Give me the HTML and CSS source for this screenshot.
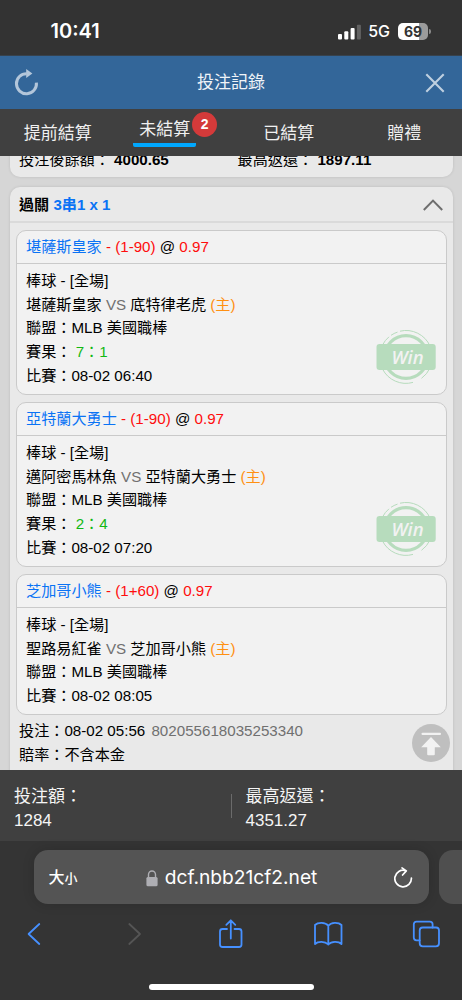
FILE: index.html
```
<!DOCTYPE html>
<html lang="zh-Hant">
<head>
    <meta charset="UTF-8">
    <meta name="viewport" content="width=device-width, initial-scale=1.0">
    <title>投注記錄</title>
    <link rel="stylesheet" href="styles.css">
</head>
<body>

<div class="status-bar">
    <span class="clock">10:41</span>
    <div class="status-icons">
        <svg width="24" height="16" viewBox="0 0 24 16">
            <rect x="0" y="10" width="4" height="5.5" rx="1" fill="#fff"/>
            <rect x="6.3" y="7.3" width="4" height="8.2" rx="1" fill="#fff"/>
            <rect x="12.6" y="4" width="4" height="11.5" rx="1" fill="#fff"/>
            <rect x="18.9" y="0.8" width="4" height="14.7" rx="1" fill="#626262"/>
        </svg>
        <span class="network">5G</span>
        <div class="battery"><span>69</span></div>
    </div>
</div>

<div class="title-bar">
    <svg width="26" height="28" viewBox="0 0 26 28">
        <path d="M12.8 4.7A10 10 0 1 0 22.4 13.6" fill="none" stroke="#b3c6da" stroke-width="3"/>
        <path d="M12.2 0L18.4 4.4L12.2 8.9z" fill="#b3c6da"/>
    </svg>
    <h1>投注記錄</h1>
    <svg width="20" height="20" viewBox="0 0 20 20">
        <path d="M1.3 1.3L18.7 18.7M18.7 1.3L1.3 18.7" stroke="#bfd0e0" stroke-width="2.1"/>
    </svg>
</div>

<div class="tabs">
    <div class="tab">提前結算</div>
    <div class="tab"><div class="tab-active">未結算<span class="badge">2</span></div></div>
    <div class="tab">已結算</div>
    <div class="tab">贈禮</div>
</div>

<div class="records">
    <div class="record record-prev">
        <div>投注後餘額： <b>4000.65</b></div>
        <div>最高返還： <b>1897.11</b></div>
    </div>

    <div class="record">
        <div class="record-header">
            <h2>過關 <span class="blue">3串1 x 1</span></h2>
            <svg width="20" height="12" viewBox="0 0 20 12">
                <path d="M0.8 11L10 1.6L19.2 11" fill="none" stroke="#6e6e6e" stroke-width="2"/>
            </svg>
        </div>

        <div class="bets">
            <div class="bet">
                <div class="bet-header"><span class="blue">堪薩斯皇家</span> <span class="red">- (1-90)</span> @ <span class="red">0.97</span></div>
                <div class="bet-body">
                    <p>棒球 - [全場]</p>
                    <p>堪薩斯皇家 <span class="gray">VS</span> 底特律老虎 <span class="orange">(主)</span></p>
                    <p>聯盟：MLB 美國職棒</p>
                    <p>賽果： <span class="green">7：1</span></p>
                    <p>比賽：08-02 06:40</p>
                    <svg class="stamp" width="60" height="56" viewBox="0 0 60 56">
                        <g fill="none" stroke="#b7dcbd">
                            <circle cx="30" cy="28" r="21.4" stroke-width="3.2"/>
                            <path d="M24 2.2A26.3 26.3 0 0 1 54 17M15 6.3A26.3 26.3 0 0 1 21.5 3.1M6.5 16A26.3 26.3 0 0 1 13 7.8M6.5 40A26.3 26.3 0 0 0 37 53.4M54 39A26.3 26.3 0 0 1 45.5 49.3"/>
                        </g>
                        <rect x="0.5" y="15" width="59.2" height="26" rx="3" fill="#b7dcbd"/>
                        <text x="31.5" y="34.5" text-anchor="middle" class="stamp-text">Win</text>
                    </svg>
                </div>
            </div>

            <div class="bet">
                <div class="bet-header"><span class="blue">亞特蘭大勇士</span> <span class="red">- (1-90)</span> @ <span class="red">0.97</span></div>
                <div class="bet-body">
                    <p>棒球 - [全場]</p>
                    <p>邁阿密馬林魚 <span class="gray">VS</span> 亞特蘭大勇士 <span class="orange">(主)</span></p>
                    <p>聯盟：MLB 美國職棒</p>
                    <p>賽果： <span class="green">2：4</span></p>
                    <p>比賽：08-02 07:20</p>
                    <svg class="stamp" width="60" height="56" viewBox="0 0 60 56">
                        <g fill="none" stroke="#b7dcbd">
                            <circle cx="30" cy="28" r="21.4" stroke-width="3.2"/>
                            <path d="M24 2.2A26.3 26.3 0 0 1 54 17M15 6.3A26.3 26.3 0 0 1 21.5 3.1M6.5 16A26.3 26.3 0 0 1 13 7.8M6.5 40A26.3 26.3 0 0 0 37 53.4M54 39A26.3 26.3 0 0 1 45.5 49.3"/>
                        </g>
                        <rect x="0.5" y="15" width="59.2" height="26" rx="3" fill="#b7dcbd"/>
                        <text x="31.5" y="34.5" text-anchor="middle" class="stamp-text">Win</text>
                    </svg>
                </div>
            </div>

            <div class="bet">
                <div class="bet-header"><span class="blue">芝加哥小熊</span> <span class="red">- (1+60)</span> @ <span class="red">0.97</span></div>
                <div class="bet-body">
                    <p>棒球 - [全場]</p>
                    <p>聖路易紅雀 <span class="gray">VS</span> 芝加哥小熊 <span class="orange">(主)</span></p>
                    <p>聯盟：MLB 美國職棒</p>
                    <p>比賽：08-02 08:05</p>
                </div>
            </div>
        </div>

        <div class="record-info">
            <p>投注：08-02 05:56 <span class="gray serial">802055618035253340</span></p>
            <p>賠率：不含本金</p>
        </div>
    </div>

    <!-- back to top -->
    <svg class="to-top" width="38" height="38" viewBox="0 0 38 38">
        <circle cx="19" cy="19" r="19" fill="#bfbfbf"/>
        <rect x="9.5" y="8.7" width="19.5" height="2.4" rx="1" fill="#f2f2f2"/>
        <path d="M19 13L28.8 23.2H22.8V30.3Q22.8 31.3 21.8 31.3H16.2Q15.2 31.3 15.2 30.3V23.2H9.2z" fill="#f2f2f2"/>
    </svg>
</div>

<div class="totals">
    <div class="total">
        <p>投注額：</p>
        <p>1284</p>
    </div>
    <div class="total">
        <p>最高返還：</p>
        <p>4351.27</p>
    </div>
</div>

<div class="browser">
    <div class="address-row">
        <div class="address">
            <span class="text-size">大<small>小</small></span>
            <div class="url">
                <svg width="12" height="17" viewBox="0 0 12 17">
                    <path d="M2.5 8V4.6a3.5 3.6 0 0 1 7 0V8" fill="none" stroke="#aeaeb3" stroke-width="1.4"/>
                    <rect x="0.4" y="7" width="11.2" height="9.2" rx="1.5" fill="#aeaeb3"/>
                </svg>
                <span>dcf.nbb21cf2.net</span>
            </div>
            <svg width="20" height="23" viewBox="0 0 20 23">
                <path d="M11.6 3.6A8.3 8.3 0 1 0 17.4 11.1M8 0.9L12.3 3.9L8.6 8" fill="none" stroke="#fff" stroke-width="1.7" stroke-linecap="round" stroke-linejoin="round"/>
            </svg>
        </div>
        <div class="next-tab"></div>
    </div>

    <div class="toolbar">
        <svg width="30" height="30" viewBox="0 0 30 30">
            <path d="M20.3 5L9.6 15L20.3 25"/>
        </svg>
        <svg class="disabled" width="30" height="30" viewBox="0 0 30 30">
            <path d="M12.3 5L23 15L12.3 25"/>
        </svg>
        <svg width="30" height="34" viewBox="0 0 30 34">
            <path d="M12 12H7.5Q5 12 5 14.5V27.5Q5 30 7.5 30H24Q26.5 30 26.5 27.5V14.5Q26.5 12 24 12H19.5M15.8 21.5V3.5M11.3 7.8L15.8 3.3L20.3 7.8"/>
        </svg>
        <svg width="30" height="30" viewBox="0 0 30 30">
            <path d="M15.3 6.7C12.5 3 5 3 2 6V25C5 22 12 22 15.3 25.5C18.5 22 25.5 22 28.5 25V6C25.5 3 18 3 15.3 6.7V25.5"/>
        </svg>
        <svg width="30" height="30" viewBox="0 0 30 30">
            <rect x="8.7" y="8.5" width="19.3" height="18.8" rx="3"/>
            <path d="M8.7 21.3H5.5Q2.8 21.3 2.8 18.6V5.3Q2.8 2.6 5.5 2.6H18.9Q21.6 2.6 21.6 5.3V8.5"/>
        </svg>
    </div>
    <div class="home-indicator"></div>
</div>

</body>
</html>
```
FILE: styles.css
```
* {
    margin: 0;
    padding: 0;
    box-sizing: border-box;
}

body {
    width: 462px;
    height: 1000px;
    display: flex;
    flex-direction: column;
    overflow: hidden;
    background-color: #343434;
    font-family: "Liberation Sans", "Noto Sans CJK TC", sans-serif;
    font-size: 15.15px;
    line-height: 23.75px;
    color: #000;
}

svg {
    display: block;
    flex: none;
}

/* phone status bar */
.status-bar {
    height: 56px;
    flex: none;
    display: flex;
    justify-content: space-between;
    align-items: center;
    padding: 8px 34px 0 50.5px;
    background-color: #333;
    border-bottom: 1px solid #37424d;
    color: #fff;
    font-family: Inter, sans-serif;
}

.clock {
    font-size: 20px;
    font-weight: 600;
}

.status-icons {
    display: flex;
    align-items: center;
}

.network {
    margin: 0 8px 0 6px;
    font-size: 16px;
    font-weight: 500;
}

.battery {
    position: relative;
    width: 30px;
    height: 17px;
    border-radius: 5px;
    background: linear-gradient(to right, #fff 69%, #9b9b9b 69%);
    color: #333;
    font-size: 14px;
    font-weight: 700;
    line-height: 17px;
    text-align: center;
}

.battery::after {
    content: "";
    position: absolute;
    left: 31px;
    top: 6px;
    width: 2px;
    height: 5px;
    border-radius: 0 2px 2px 0;
    background-color: #8a8a8a;
}

/* page header */
.title-bar {
    height: 53px;
    flex: none;
    display: flex;
    justify-content: space-between;
    align-items: center;
    padding: 0 17px 0 14px;
    background-color: #336699;
    color: #f0f4f8;
}

.title-bar h1 {
    font-size: 17px;
    font-weight: normal;
    padding-right: 3px;
}

.tabs {
    height: 47px;
    flex: none;
    display: flex;
    background-color: #404040;
    color: #f0f0f0;
    font-size: 17px;
}

.tab {
    flex: 1;
    display: flex;
    justify-content: center;
    align-items: center;
    padding-top: 3px;
}

.tab-active {
    position: relative;
    width: 63px;
    height: 29px;
    margin: -3px 17px 0 0;
    border-bottom: 4px solid #00a8ff;
    border-radius: 2px;
    text-align: center;
}

.badge {
    position: absolute;
    right: -21px;
    top: -6px;
    width: 25px;
    height: 25px;
    border-radius: 50%;
    background-color: #d43a3a;
    color: #fff;
    font-size: 14px;
    font-weight: bold;
    line-height: 25px;
}

/* bet records */
.records {
    position: relative;
    height: 614px;
    flex: none;
    overflow: hidden;
    padding: 0 9.5px;
    background-color: #d6d6d6;
}

.record {
    background-color: #e9e9e9;
    border-radius: 10px;
    box-shadow: 0 0 3px rgba(0, 0, 0, 0.12);
}

.record-prev {
    display: grid;
    grid-template-columns: 218.5px 1fr;
    margin: -10px 0 10px;
    padding: 2px 9.5px 5.25px;
}

.record-header {
    height: 36px;
    display: flex;
    justify-content: space-between;
    align-items: center;
    padding: 1px 9.5px 0;
    border-bottom: 2px solid #dadada;
}

.record-header h2 {
    font-size: 15.1px;
}

.bets {
    display: flex;
    flex-direction: column;
    gap: 7px;
    padding: 7px 6px 0;
}

.bet {
    border: 1px solid #cacaca;
    border-radius: 10px;
    background-color: #f2f2f2;
}

.bet-header {
    height: 33px;
    padding: 4px 10px 0 9.5px;
    border-bottom: 1px solid #cacaca;
}

.bet-body {
    position: relative;
    padding: 4.75px 10px 6.5px 9.5px;
}

.stamp {
    position: absolute;
    right: 10px;
    bottom: 9px;
}

.stamp-text {
    font-family: "Open Sans", sans-serif;
    font-size: 18.5px;
    font-weight: 600;
    font-style: italic;
    fill: #f2f2f2;
}

.record-info {
    height: 100px;
    padding: 3.5px 9.5px;
}

.serial {
    margin-left: 2px;
}

.blue {
    color: #0a73f5;
}

.red {
    color: #ff0d0d;
}

.gray {
    color: #707070;
}

.orange {
    color: #ff9012;
}

.green {
    color: #12b812;
}

.to-top {
    position: absolute;
    right: 12px;
    bottom: 8px;
}

/* totals */
.totals {
    height: 71px;
    flex: none;
    display: flex;
    align-items: center;
    background-color: #404040;
    color: #f5f5f5;
    font-size: 17px;
    line-height: 24px;
}

.total {
    flex: 1;
    padding: 7px 0 0 14px;
}

.total + .total {
    height: 24px;
    display: flex;
    flex-direction: column;
    justify-content: center;
    border-left: 1px solid #6b6b6b;
}

/* browser controls */
.browser {
    flex: 1;
    display: flex;
    flex-direction: column;
    background-color: #343434;
}

.address-row {
    display: flex;
    gap: 10px;
    padding: 9px 0 0 33.5px;
}

.address {
    width: 395px;
    height: 54px;
    flex: none;
    display: flex;
    align-items: center;
    justify-content: space-between;
    padding: 2px 15px 0;
    border-radius: 14px;
    background-color: #545454;
    box-shadow: 0 0 12px rgba(0, 0, 0, 0.15);
    color: #fff;
}

.text-size {
    font-size: 16px;
    font-weight: 500;
}

.text-size small {
    font-size: 13px;
}

.url {
    display: flex;
    align-items: center;
    gap: 7px;
    padding-right: 8px;
    font-family: Inter, sans-serif;
    font-size: 19.2px;
}

.next-tab {
    flex: 1;
    border-radius: 14px 0 0 14px;
    background-color: #4f4f4f;
}

.toolbar {
    height: 60px;
    display: flex;
    justify-content: space-between;
    align-items: center;
    padding: 0 21px 0 19px;
}

.toolbar svg {
    fill: none;
    stroke: #4690ff;
    stroke-width: 1.8;
    stroke-linecap: round;
    stroke-linejoin: round;
}

.toolbar .disabled {
    stroke: #555;
}

.home-indicator {
    width: 165px;
    height: 6px;
    margin: 20px auto 0;
    border-radius: 3px;
    background-color: #fff;
}
```
